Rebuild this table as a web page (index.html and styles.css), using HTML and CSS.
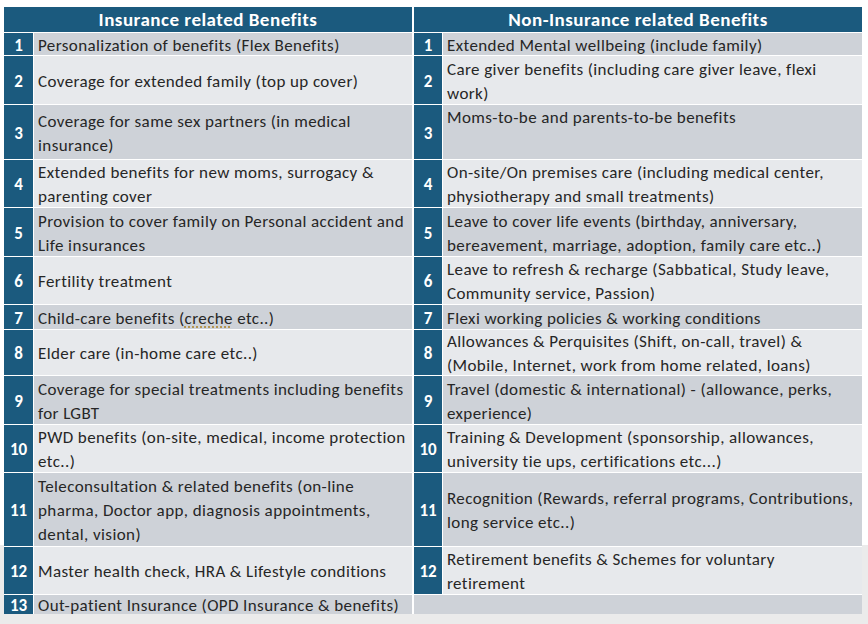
FILE: index.html
```html
<!DOCTYPE html>
<html>
<head>
<meta charset="utf-8">
<link rel="stylesheet" href="styles.css">
</head>
<body>
<div class="grid">
  <div class="head head-left">Insurance related Benefits</div>
  <div class="head head-right">Non-Insurance related Benefits</div>

  <div class="num r1">1</div><div class="txt odd"><span>Personalization of benefits (Flex Benefits)</span></div>
  <div class="num right-num">1</div><div class="txt odd"><span>Extended Mental wellbeing (include family)</span></div>

  <div class="num">2</div><div class="txt even"><span>Coverage for extended family (top up cover)</span></div>
  <div class="num right-num">2</div><div class="txt even"><span>Care giver benefits (including care giver leave, flexi<br>work)</span></div>

  <div class="num">3</div><div class="txt odd"><span>Coverage for same sex partners (in medical<br>insurance)</span></div>
  <div class="num right-num">3</div><div class="txt odd top"><span>Moms-to-be and parents-to-be benefits</span></div>

  <div class="num">4</div><div class="txt even"><span>Extended benefits for new moms, surrogacy &amp;<br>parenting cover</span></div>
  <div class="num right-num">4</div><div class="txt even"><span>On-site/On premises care (including medical center,<br>physiotherapy and small treatments)</span></div>

  <div class="num">5</div><div class="txt odd"><span>Provision to cover family on Personal accident and<br>Life insurances</span></div>
  <div class="num right-num">5</div><div class="txt odd"><span>Leave to cover life events (birthday, anniversary,<br>bereavement, marriage, adoption, family care etc..)</span></div>

  <div class="num">6</div><div class="txt even"><span>Fertility treatment</span></div>
  <div class="num right-num">6</div><div class="txt even"><span>Leave to refresh &amp; recharge (Sabbatical, Study leave,<br>Community service, Passion)</span></div>

  <div class="num">7</div><div class="txt odd"><span>Child-care benefits (<span class="spell">creche</span> etc..)</span></div>
  <div class="num right-num">7</div><div class="txt odd"><span>Flexi working policies &amp; working conditions</span></div>

  <div class="num">8</div><div class="txt even"><span>Elder care (in-home care etc..)</span></div>
  <div class="num right-num">8</div><div class="txt even"><span>Allowances &amp; Perquisites (Shift, on-call, travel) &amp;<br>(Mobile, Internet, work from home related, loans)</span></div>

  <div class="num">9</div><div class="txt odd"><span>Coverage for special treatments including benefits<br>for LGBT</span></div>
  <div class="num right-num">9</div><div class="txt odd"><span>Travel (domestic &amp; international) - (allowance, perks,<br>experience)</span></div>

  <div class="num">10</div><div class="txt even"><span>PWD benefits (on-site, medical, income protection<br>etc..)</span></div>
  <div class="num right-num">10</div><div class="txt even"><span>Training &amp; Development (sponsorship, allowances,<br>university tie ups, certifications etc...)</span></div>

  <div class="num">11</div><div class="txt odd"><span>Teleconsultation &amp; related benefits (on-line<br>pharma, Doctor app, diagnosis appointments,<br>dental, vision)</span></div>
  <div class="num right-num">11</div><div class="txt odd"><span>Recognition (Rewards, referral programs, Contributions,<br>long service etc..)</span></div>

  <div class="num">12</div><div class="txt even"><span>Master health check, HRA &amp; Lifestyle conditions</span></div>
  <div class="num right-num">12</div><div class="txt even"><span>Retirement benefits &amp; Schemes for voluntary<br>retirement</span></div>

  <div class="num">13</div><div class="txt odd"><span>Out-patient Insurance (OPD Insurance &amp; benefits)</span></div>
  <div class="blank odd"></div>
</div>
</body>
</html>
```

FILE: styles.css
```css
html {
  background: linear-gradient(#ffffff 0, #ffffff 545px, #ebebeb 545px);
  min-height: 100%;
}
body {
  margin: 0;
  font-family: "Carlito", "Lato", "Liberation Sans", sans-serif;
  color: #262626;
}
.grid {
  margin: 7px 0 0 4px;
  width: 858px;
  display: grid;
  grid-template-columns: 29px 378px 29px 419px;
  grid-template-rows: 25px 22px 48px 54px 47px 48px 47px 24px 45px 48px 47px 73px 47px 19px;
  column-gap: 1px;
  row-gap: 1px;
  background: #ffffff;
}
.head {
  background: #1b5a7e;
  color: #ffffff;
  font-weight: bold;
  font-size: 19px;
  letter-spacing: 0.5px;
  display: flex;
  align-items: center;
  justify-content: center;
}
.head-left { grid-column: 1 / 3; }
.head-right { grid-column: 3 / 5; margin-left: 1px; }
.num {
  background: #1b5a7e;
  color: #ffffff;
  font-weight: bold;
  font-size: 17px;
  padding-top: 2px;
  display: flex;
  align-items: center;
  justify-content: center;
}
.right-num { margin-left: 1px; }
.txt {
  font-size: 17px;
  letter-spacing: 0.4px;
  line-height: 24px;
  padding-left: 4px;
  padding-top: 3px;
  display: flex;
  align-items: center;
  white-space: nowrap;
  overflow: visible;
}
.txt.top { align-items: flex-start; padding-top: 1px; }
.odd { background: #ced2d8; }
.even { background: #e7e9ec; }
.blank { grid-column: 3 / 5; margin-left: 1px; }
.spell {
  text-decoration: underline dotted #b08a3a;
  text-underline-offset: 3px;
}
```
